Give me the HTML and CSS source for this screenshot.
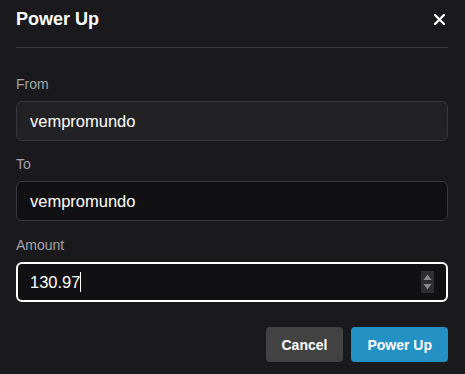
FILE: index.html
```html
<!DOCTYPE html>
<html>
<head>
    <title>Power Up</title>
    <link rel="stylesheet" href="styles.css">
</head>
<body>

<div class="modal">
    <div class="modal-header">
        <h1>Power Up</h1>
        <svg class="close" width="11" height="11" viewBox="0 0 11 11">
            <path d="M1 1 L10 10 M10 1 L1 10" stroke="#fff" stroke-width="2.2" stroke-linecap="square"/>
        </svg>
    </div>

    <div class="modal-body">
        <label class="label">From</label>
        <div class="field field-disabled">vempromundo</div>

        <label class="label">To</label>
        <div class="field">vempromundo</div>

        <label class="label label-amount">Amount</label>
        <div class="field field-focus">
            <span>130.97<span class="caret"></span></span>
            <span class="spinner">
                <svg width="13" height="22" viewBox="0 0 13 22">
                    <rect width="13" height="22" fill="#2e2e31"/>
                    <path d="M2.5 9 L6.5 3.5 L10.5 9 Z" fill="#8a8a8e"/>
                    <path d="M2.5 13 L6.5 18.5 L10.5 13 Z" fill="#8a8a8e"/>
                </svg>
            </span>
        </div>
    </div>

    <div class="modal-footer">
        <button class="btn btn-cancel">Cancel</button>
        <button class="btn btn-primary">Power Up</button>
    </div>
</div>

</body>
</html>
```

FILE: styles.css
```css
body {
    margin: 0;
    background-color: #1a1a1d;
    font-family: "Liberation Sans", Arial, sans-serif;
    color: #fff;
}
.modal {
    width: 465px;
    height: 374px;
    padding: 0 17px 0 16px;
    box-sizing: border-box;
}
.modal-header {
    display: flex;
    justify-content: space-between;
    align-items: center;
    height: 48px;
    box-sizing: border-box;
    padding-bottom: 9px;
    border-bottom: 1px solid #38383d;
}
.modal-header h1 {
    margin: 0;
    font-size: 18px;
    font-weight: bold;
}
.close {
    margin-right: 3px;
}
.modal-body {
    display: flex;
    flex-direction: column;
}
.label {
    color: #a3a3a8;
    font-size: 14px;
    line-height: 16px;
    margin-top: 28px;
    margin-bottom: 9px;
}
.label + .field ~ .label {
    margin-top: 16px;
}
.label + .field ~ .label-amount {
    margin-top: 17px;
}
.field {
    display: flex;
    align-items: center;
    justify-content: space-between;
    height: 40px;
    box-sizing: border-box;
    padding: 0 12px 0 13px;
    border: 1px solid #39393d;
    border-radius: 6px;
    background-color: #111113;
    font-size: 16.5px;
    margin-bottom: -1px;
}
.field-disabled {
    background-color: #222225;
}
.field-focus {
    border: 2px solid #fff;
    padding: 0 12px 0 12px;
}
.caret {
    display: inline-block;
    width: 1px;
    height: 20px;
    background-color: #fff;
    vertical-align: -4px;
}
.spinner {
    display: flex;
}
.modal-footer {
    display: flex;
    justify-content: flex-end;
    gap: 8px;
    margin-top: 26px;
}
.btn {
    height: 35px;
    border: 0;
    border-radius: 4px;
    color: #fff;
    font-family: "Liberation Sans", Arial, sans-serif;
    font-size: 14px;
    font-weight: bold;
    padding: 0 16px;
}
.btn-cancel {
    background-color: #424242;
}
.btn-primary {
    background-color: #2491c5;
}
```
